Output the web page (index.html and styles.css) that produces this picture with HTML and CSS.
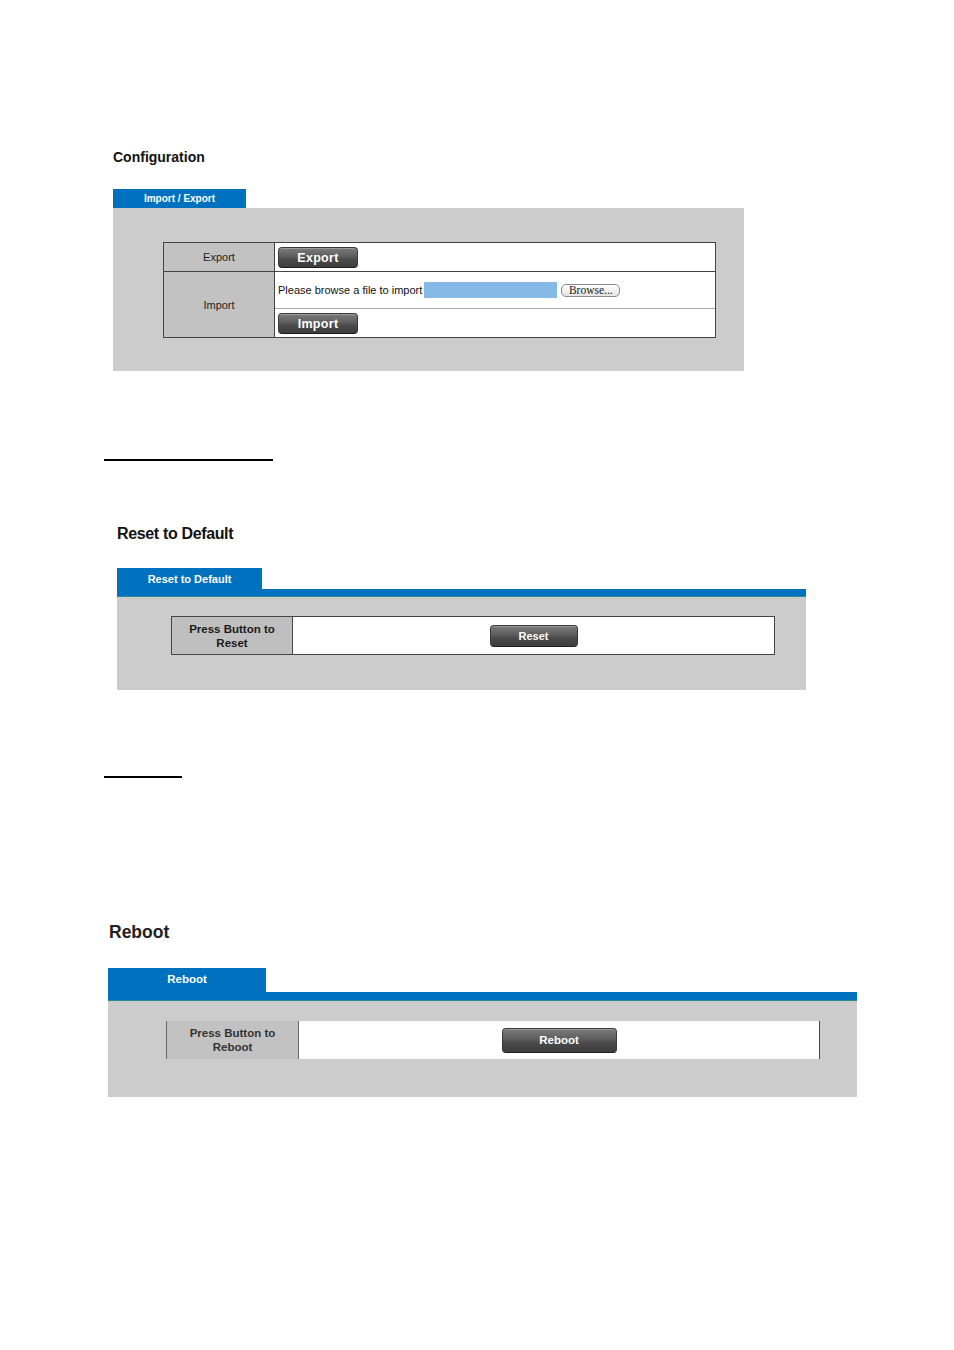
FILE: index.html
```html
<!DOCTYPE html>
<html>
<head>
<meta charset="utf-8">
<link rel="stylesheet" href="styles.css">
</head>
<body>
<div class="page">
  <section class="sec sec-config">
    <h2 class="title title-config">Configuration</h2>
    <div class="tab tab-config">Import / Export</div>
    <div class="panel panel-config">
      <div class="cfg-table">
        <div class="lbl lbl-export">Export</div>
        <div class="val val-export"><button class="btn btn-cfg">Export</button></div>
        <div class="lbl lbl-import">Import</div>
        <div class="val val-browse">
          <span class="browse-text">Please browse a file to import</span>
          <span class="file-field"></span>
          <span class="browse-btn">Browse...</span>
        </div>
        <div class="val val-import"><button class="btn btn-cfg">Import</button></div>
      </div>
    </div>
  </section>

  <div class="rule rule-1"></div>

  <section class="sec sec-reset">
    <h2 class="title title-reset">Reset to Default</h2>
    <div class="tab tab-reset">Reset to Default</div>
    <div class="bar bar-reset"></div>
    <div class="panel panel-reset">
      <div class="act-table act-reset">
        <div class="act-lbl">Press Button to<br>Reset</div>
        <div class="act-val"><button class="btn btn-reset">Reset</button></div>
      </div>
    </div>
  </section>

  <div class="rule rule-2"></div>

  <section class="sec sec-reboot">
    <h2 class="title title-reboot">Reboot</h2>
    <div class="tab tab-reboot">Reboot</div>
    <div class="bar bar-reboot"></div>
    <div class="panel panel-reboot">
      <div class="act-table act-reboot">
        <div class="act-lbl">Press Button to<br>Reboot</div>
        <div class="act-val"><button class="btn btn-reboot">Reboot</button></div>
      </div>
    </div>
  </section>
</div>
</body>
</html>
```

FILE: styles.css
```css
* { box-sizing: border-box; }

body {
  margin: 0;
  background: #fff;
  color: #000;
  font-family: "Liberation Sans", Arial, sans-serif;
}

.page {
  padding-top: 149px;
  padding-bottom: 200px;
}

.title {
  margin: 0;
  font-weight: bold;
  color: #111;
}

.tab {
  display: flex;
  align-items: center;
  justify-content: center;
  background: #0071bf;
  color: #fff;
  font-weight: bold;
}

.panel {
  background: #cccccc;
}

.bar {
  background: #0071bf;
  border-bottom: 1px solid #2a8a92;
}

/* ---------- Section 1: Configuration ---------- */
.sec-config { margin-left: 113px; }

.title-config {
  font-size: 14px;
  line-height: 16px;
}

.tab-config {
  margin-top: 24px;
  width: 133px;
  height: 19px;
  font-size: 10px;
}

.panel-config {
  width: 631px;
  height: 163px;
  padding: 34px 0 0 50px;
}

.cfg-table {
  width: 553px;
  border: 1px solid #444;
  display: grid;
  grid-template-columns: 111px 1fr;
  grid-template-rows: 29px 37px 28px;
  background: #fff;
}

.lbl {
  background: #c2c2c2;
  border-right: 1px solid #444;
  display: flex;
  align-items: center;
  justify-content: center;
  font-size: 11px;
  color: #222;
}

.lbl-export {
  border-bottom: 1px solid #444;
}

.lbl-import {
  grid-row: 2 / span 2;
  grid-column: 1;
}

.val {
  display: flex;
  padding-left: 3px;
}

.val-export {
  border-bottom: 1px solid #444;
  padding-top: 4px;
}

.val-browse {
  border-bottom: 1px solid #aaa;
  align-items: center;
}

.val-import {
  padding-top: 4px;
}

.browse-text {
  font-size: 11px;
  color: #111;
  white-space: nowrap;
}

.file-field {
  margin-left: 2px;
  width: 133px;
  height: 16px;
  background: #86b9e5;
}

.browse-btn {
  margin-left: 4px;
  width: 59px;
  height: 13px;
  border: 1px solid #8a8a8a;
  border-radius: 5px;
  background: linear-gradient(#ffffff, #e4e4e4);
  font-family: "Liberation Serif", "Times New Roman", serif;
  font-size: 11.5px;
  line-height: 11px;
  color: #222;
  text-align: center;
}

/* ---------- buttons ---------- */
.btn {
  display: flex;
  align-items: center;
  justify-content: center;
  padding: 0;
  border: 1px solid #3a3a3a;
  border-bottom-color: #1e1e1e;
  border-radius: 4px;
  background: linear-gradient(#7b7b7b 0%, #5d5d5d 45%, #4a4a4a 60%, #3d3d3d 100%);
  box-shadow: inset 0 1px 0 rgba(255,255,255,0.25);
  color: #fff;
  font-family: "Liberation Sans", Arial, sans-serif;
  font-weight: bold;
}

.btn-cfg {
  width: 80px;
  height: 21px;
  font-size: 12.5px;
  letter-spacing: 0.3px;
}

.btn-reset {
  width: 88px;
  height: 22px;
  font-size: 11px;
}

.btn-reboot {
  width: 115px;
  height: 25px;
  font-size: 11.5px;
}

/* ---------- rules ---------- */
.rule {
  margin-left: 104px;
  height: 2px;
  background: #000;
}

.rule-1 {
  margin-top: 88px;
  width: 169px;
}

.rule-2 {
  margin-top: 86px;
  width: 78px;
}

/* ---------- Section 2: Reset ---------- */
.sec-reset { margin-left: 117px; }

.title-reset {
  margin-top: 64px;
  font-size: 16px;
  line-height: 18px;
  letter-spacing: -0.35px;
}

.tab-reset {
  margin-top: 25px;
  width: 145px;
  height: 21px;
  font-size: 11px;
}

.bar-reset {
  width: 689px;
  height: 8px;
}

.panel-reset {
  width: 689px;
  height: 93px;
  padding: 19px 0 0 54px;
}

.act-table {
  display: grid;
  background: #fff;
}

.act-reset {
  width: 604px;
  height: 39px;
  border: 1px solid #444;
  grid-template-columns: 121px 1fr;
}

.act-lbl {
  background: #bfbfbf;
  display: flex;
  align-items: center;
  justify-content: center;
  text-align: center;
  font-weight: bold;
  color: #1a1a1a;
}

.act-reset .act-lbl {
  border-right: 1px solid #444;
  font-size: 11.5px;
  line-height: 14px;
}

.act-val {
  display: flex;
  align-items: center;
  justify-content: center;
}

/* ---------- Section 3: Reboot ---------- */
.sec-reboot { margin-left: 108px; }

.title-reboot {
  margin-top: 144px;
  margin-left: 1px;
  font-size: 17.5px;
  line-height: 20px;
  color: #222;
}

.tab-reboot {
  margin-top: 26px;
  width: 158px;
  height: 24px;
  font-size: 11.5px;
  padding-bottom: 3px;
}

.bar-reboot {
  width: 749px;
  height: 9px;
}

.panel-reboot {
  width: 749px;
  height: 96px;
  padding: 20px 0 0 58px;
}

.act-reboot {
  width: 654px;
  height: 38px;
  grid-template-columns: 133px 1fr;
  border-right: 1px solid #444;
}

.act-reboot .act-lbl {
  border-left: 1px solid #666;
  border-right: 1px solid #666;
  background: #c2c2c2;
  font-size: 11.5px;
  line-height: 14px;
  color: #333;
}
```
